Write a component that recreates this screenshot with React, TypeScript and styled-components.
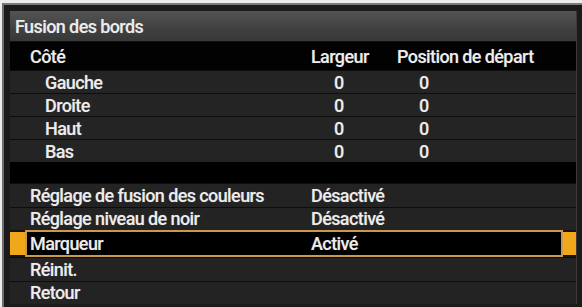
import React from 'react';
import styled, {createGlobalStyle} from 'styled-components';

const GlobalStyle = createGlobalStyle`
    html, body {
        margin: 0;
        padding: 0;
        background: #ececec;
        overflow: hidden;
    }
`

type SideRowType = {
    label: string
    width: string
    start: string
}

const sides: SideRowType[] = [
    {label: 'Gauche', width: '0', start: '0'},
    {label: 'Droite', width: '0', start: '0'},
    {label: 'Haut', width: '0', start: '0'},
    {label: 'Bas', width: '0', start: '0'},
]

type SettingType = {
    label: string
    value?: string
    selected?: boolean
}

const settings: SettingType[] = [
    {label: 'Réglage de fusion des couleurs', value: 'Désactivé'},
    {label: 'Réglage niveau de noir', value: 'Désactivé'},
    {label: 'Marqueur', value: 'Activé', selected: true},
    {label: 'Réinit.'},
    {label: 'Retour'},
]

export default function App() {
    return (
        <>
            <GlobalStyle/>
            <Frame>
                <Panel>
                    <Title>Fusion des bords</Title>
                    <HeaderRow>
                        <Cell $indent={20}>Côté</Cell>
                        <Cell>Largeur</Cell>
                        <Cell>Position de départ</Cell>
                    </HeaderRow>
                    {sides.map(s => (
                        <DataRow key={s.label}>
                            <Cell $indent={35}>{s.label}</Cell>
                            <Cell $indent={23}>{s.width}</Cell>
                            <Cell $indent={22}>{s.start}</Cell>
                        </DataRow>
                    ))}
                    <Gap/>
                    {settings.map(s => s.selected
                        ? (
                            <SelectedRow key={s.label}>
                                <Marker $w={15}/>
                                <SelectBox>
                                    <Cell $indent={3}>{s.label}</Cell>
                                    <Cell>{s.value}</Cell>
                                </SelectBox>
                                <Marker $w={13}/>
                            </SelectedRow>
                        )
                        : (
                            <SettingRow key={s.label}>
                                <Cell $indent={20}>{s.label}</Cell>
                                <Cell>{s.value}</Cell>
                            </SettingRow>
                        ))}
                </Panel>
            </Frame>
        </>
    );
}

const Frame = styled.div`
    margin: 3px 0 0 2px;
    width: 580px;
    height: 304px;
    box-sizing: border-box;
    background: #1b1b1b;
    border-top: 2px solid #7a7a7a;
    border-left: 2px solid #6c6c6c;
    padding: 6px 6px 0 6px;
    font-family: Roboto, "Liberation Sans", sans-serif;
    font-weight: 500;
    font-size: 18px;
    letter-spacing: -0.6px;
    color: #ececec;
    text-shadow: 0 0 1px rgba(255, 255, 255, 0.3);
`

const Panel = styled.div`
    display: flex;
    flex-direction: column;
    width: 566px;
    background: #000;
    border-right: 1px solid #3a3a3a;
`

const Title = styled.div`
    height: 31px;
    line-height: 31px;
    padding-left: 5px;
    background: linear-gradient(#545454, #404040 60%, #383838);
    border-bottom: 1px solid #111;
    box-sizing: border-box;
`

const Cell = styled.span<{ $indent?: number }>`
    padding-left: ${props => props.$indent ?? 0}px;
    white-space: nowrap;
`

const HeaderRow = styled.div`
    display: grid;
    grid-template-columns: 301px 86px 1fr;
    align-items: center;
    height: 28px;
    background: #020202;
`

const DataRow = styled.div`
    display: grid;
    grid-template-columns: 301px 86px 1fr;
    align-items: center;
    height: 23px;
    box-sizing: border-box;
    background: #242424;
    border-top: 1px solid #0d0d0d;
`

const Gap = styled.div`
    height: 21px;
    background: #000;
`

const SettingRow = styled.div`
    display: grid;
    grid-template-columns: 301px 1fr;
    align-items: center;
    height: 23.5px;
    box-sizing: border-box;
    background: #232323;
    border-top: 1px solid #0d0d0d;
`

const SelectedRow = styled.div`
    display: flex;
    align-items: center;
    height: 27px;
    background: #141414;
`

const Marker = styled.div<{ $w: number }>`
    width: ${props => props.$w}px;
    height: 23px;
    background: #f0a81a;
    flex: none;
`

const SelectBox = styled.div`
    flex: 1;
    height: 100%;
    box-sizing: border-box;
    display: grid;
    grid-template-columns: 284px 1fr;
    align-items: center;
    background: #000;
    border: 2px solid #c99a4e;
`
